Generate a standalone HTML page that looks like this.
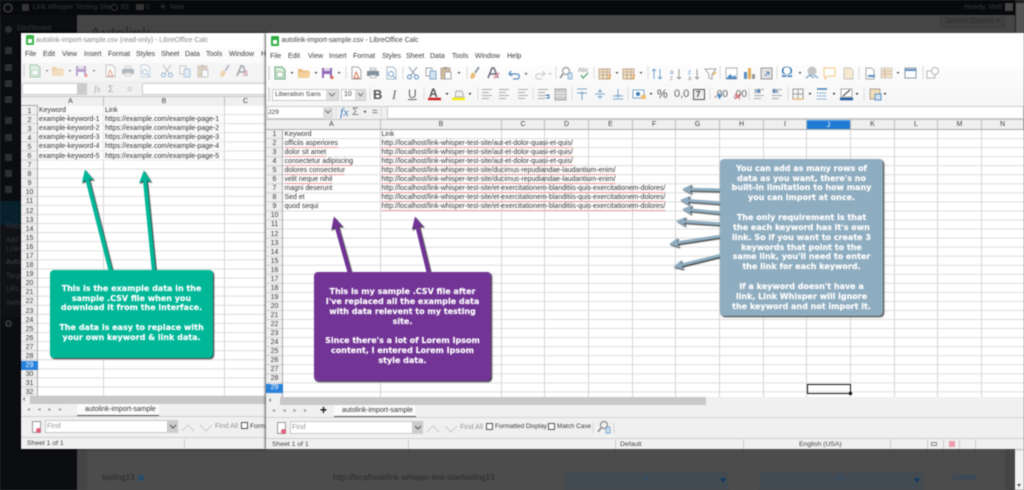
<!DOCTYPE html>
<html><head><meta charset="utf-8"><style>
*{box-sizing:border-box}
html,body{margin:0;padding:0;width:1024px;height:490px;overflow:hidden;background:#4a4a4a}
#w{position:absolute;left:0;top:0;width:1024px;height:490px;overflow:hidden;filter:blur(.55px);font-family:"Liberation Sans",sans-serif}
.a{position:absolute}
.t{position:absolute;white-space:nowrap;line-height:10px}
.m{font-size:7px;color:#3c3c3c}
.d{font-size:6.95px;color:#333}
.dim{color:#35383c;font-size:7px}
.win{position:absolute;background:#f0f0f0;overflow:hidden}
.grid{position:absolute;background-color:#fff}
.rn{position:absolute;text-align:center;font-size:7px;color:#3c3c3c;white-space:pre}
.ch{position:absolute;text-align:center;font-size:7px;color:#444;line-height:9px;border-right:1px solid #bbb;background:#efefef;height:9px}
.sq{display:inline-block;line-height:8.5px;background:repeating-linear-gradient(90deg,#e46a6a 0 1px,#f7d5d5 1px 2px) 0 100%/100% 1px no-repeat}
.card{position:absolute;border-radius:4px;box-shadow:1px 1px 1.5px #222}
.c{position:absolute;text-align:center;white-space:nowrap;font:bold 8px/9.85px "DejaVu Sans",sans-serif;color:#fff;-webkit-text-stroke:.15px #fff;left:0;right:0}
svg{position:absolute;left:0;top:0;overflow:visible}
</style></head><body><div id="w">

<!-- dark page -->
<div class="a" style="left:0;top:0;width:1024px;height:15px;background:#07090c"></div>
<div class="a" style="left:0;top:15px;width:77px;height:475px;background:#0b0d11"></div>
<div class="a" style="left:77px;top:15px;width:938px;height:475px;background:#454545"></div>
<div class="a" style="left:87px;top:449px;width:918px;height:41px;background:#4c4c4c"></div>
<div class="a" style="left:1015px;top:0;width:9px;height:33px;background:#222"></div>
<div class="a" style="left:1016px;top:3px;width:8px;height:30px;background:#555"></div>
<div class="a" style="left:1015px;top:449px;width:9px;height:41px;background:#f1f1f1"></div>
<div class="a" style="left:1017px;top:484px;width:0;height:0;border:2.5px solid transparent;border-top:3px solid #555"></div>

<div class="t dim" style="left:33px;top:3px">Link Whisper Testing Site</div>
<div class="t dim" style="left:121px;top:3px">63</div>
<div class="t dim" style="left:146px;top:3px">0</div>
<div class="t dim" style="left:170px;top:3px">New</div>
<div class="t dim" style="left:964px;top:3px">Howdy, Matt</div>
<div class="a" style="left:1005px;top:3px;width:8px;height:8px;background:#444"></div>
<div class="a" style="left:3px;top:3px;width:10px;height:10px;border-radius:50%;border:2px solid #333"></div>
<div class="a" style="left:22px;top:4px;width:7px;height:7px;background:#333"></div>
<div class="a" style="left:111px;top:4px;width:7px;height:7px;border-radius:50%;border:1.5px solid #333"></div>
<div class="a" style="left:136px;top:4px;width:8px;height:6px;background:#333"></div>
<div class="t" style="left:160px;top:3px;font-size:10px;color:#333;font-weight:bold">+</div>
<div class="a" style="left:940px;top:17px;width:65px;height:11px;background:#404040;border:1px solid #3a3a3a"></div>
<div class="t dim" style="left:946px;top:17px;color:#2c2c2c">Screen Options ▾</div>
<div class="t" style="left:90px;top:29px;font-size:17px;color:#2c2c2c">Autolink</div>

<div class="t dim" style="left:17px;top:24px">Dashboard</div>
<div class="a" style="left:5px;top:26px;width:7px;height:7px;border-radius:50%;background:#2c2e32"></div>
<div class="a" style="left:5px;top:47px;width:7px;height:7px;background:#2c2e32"></div>
<div class="a" style="left:5px;top:64px;width:7px;height:7px;background:#2c2e32"></div>
<div class="a" style="left:5px;top:80px;width:7px;height:7px;background:#2c2e32"></div>
<div class="a" style="left:5px;top:96px;width:7px;height:7px;background:#2c2e32"></div>
<div class="a" style="left:5px;top:117px;width:7px;height:7px;background:#2c2e32"></div>
<div class="a" style="left:5px;top:134px;width:7px;height:7px;background:#2c2e32"></div>
<div class="a" style="left:5px;top:154px;width:7px;height:7px;background:#2c2e32"></div>
<div class="a" style="left:5px;top:170px;width:7px;height:7px;background:#2c2e32"></div>
<div class="a" style="left:5px;top:186px;width:7px;height:7px;background:#2c2e32"></div>
<div class="a" style="left:0;top:201px;width:21px;height:24px;background:#08202c"></div>
<div class="a" style="left:0;top:225px;width:21px;height:92px;background:#101216"></div>
<div class="t dim" style="left:6px;top:222px">Repor</div>
<div class="t dim" style="left:6px;top:236px">Add</div>
<div class="t dim" style="left:6px;top:245px">Links</div>
<div class="t dim" style="left:6px;top:258px;color:#45484c">Autol</div>
<div class="t dim" style="left:6px;top:272px">Targe</div>
<div class="t dim" style="left:6px;top:285px">URL C</div>
<div class="t dim" style="left:6px;top:299px">Settir</div>
<div class="a" style="left:5px;top:320px;width:7px;height:7px;border-radius:50%;border:2px solid #35383c"></div>

<div class="t" style="left:102px;top:473px;font-size:8px;color:#2a2a2a">testing13</div>
<div class="a" style="left:138px;top:475px;width:6px;height:6px;border-radius:50%;border:2px solid #1f4d75"></div>
<div class="t" style="left:333px;top:473px;font-size:8px;color:#2a2a2a">http://localhost/link-whisper-test-site/testing13</div>
<div class="a" style="left:564px;top:472px;width:165px;height:18px;background:#434b52"></div>
<div class="t" style="left:644px;top:474px;font-size:8px;color:#1f4d75">0</div>
<div class="a" style="left:720px;top:478px;border:3.5px solid transparent;border-top:5px solid #123a5e"></div>
<div class="a" style="left:759px;top:472px;width:165px;height:18px;background:#434b52"></div>
<div class="t" style="left:838px;top:474px;font-size:8px;color:#1f4d75">0</div>
<div class="a" style="left:914px;top:478px;border:3.5px solid transparent;border-top:5px solid #123a5e"></div>
<div class="t" style="left:953px;top:473px;font-size:8px;color:#23456a">Delete</div>

<!-- LEFT WINDOW -->
<div class="win" style="left:21px;top:33px;width:246px;height:416px;box-shadow:0 0 2px #000">
 <div class="a" style="left:0;top:0;width:246px;height:15px;background:#fff"></div>
 <div class="a" style="left:0;top:15px;width:246px;height:15px;background:#fbfbfb"></div>
 <div class="a" style="left:0;top:30px;width:246px;height:18px;background:#f5f5f5"></div>
</div>
<div class="a" style="left:26px;top:35px;width:8px;height:10px;background:#3db54a;border-radius:1px"></div>
<div class="a" style="left:28px;top:39px;width:4px;height:4px;background:#fff"></div>
<div class="t" style="left:36px;top:35.5px;font-size:6.9px;color:#8a8a8a">autolink-import-sample.csv (read-only) - LibreOffice Calc</div>
<div class="t m" style="left:25px;top:50px">File</div><div class="t m" style="left:43px;top:50px">Edit</div><div class="t m" style="left:62px;top:50px">View</div><div class="t m" style="left:84px;top:50px">Insert</div><div class="t m" style="left:108px;top:50px">Format</div><div class="t m" style="left:136px;top:50px">Styles</div><div class="t m" style="left:161px;top:50px">Sheet</div><div class="t m" style="left:185px;top:50px">Data</div><div class="t m" style="left:206px;top:50px">Tools</div><div class="t m" style="left:229px;top:50px">Window</div><div class="t m" style="left:261px;top:50px">H</div>

<!-- left name box row -->
<div class="a" style="left:21px;top:81px;width:246px;height:15px;background:#f0f0f0"></div>
<div class="a" style="left:22px;top:83px;width:56px;height:12px;background:#fff;border:1px solid #ccc"></div>
<div class="a" style="left:78px;top:83px;width:9px;height:12px;background:#ccc"></div>
<div class="a" style="left:142px;top:83px;width:125px;height:12px;background:#fff;border:1px solid #ccc"></div>
<div class="t" style="left:94px;top:84px;font:italic 9px/10px 'Liberation Serif',serif;color:#aaa">fx</div>
<div class="t" style="left:108px;top:84px;font-size:9px;color:#aaa">Σ</div>
<div class="t" style="left:127px;top:84px;font-size:9px;color:#aaa">=</div>

<!-- left grid -->
<div class="a" style="left:21px;top:96px;width:246px;height:10px;background:#efefef;border-top:1px solid #c4c4c4;border-bottom:1px solid #aaa"></div>
<div class="ch" style="left:38px;top:97px;width:66px">A</div>
<div class="ch" style="left:104px;top:97px;width:121px">B</div>
<div class="ch" style="left:225px;top:97px;width:42px">C</div>
<div class="grid" style="left:38px;top:106px;width:229px;height:290px;background-image:linear-gradient(to bottom,transparent 8.09px,#dcdcdc 8.09px),linear-gradient(to right,transparent 65px,#d4d4d4 65px,#d4d4d4 66px,transparent 66px,transparent 186px,#d4d4d4 186px,#d4d4d4 187px,transparent 187px);background-size:100% 9.09px,100% 100%"></div>
<div class="a" style="left:38px;top:106px;width:186px;height:54.5px;background:#f7f7f7;opacity:.5"></div>
<div class="a" style="left:21px;top:106px;width:17px;height:290px;background:#efefef;border-right:1px solid #aaa;background-image:linear-gradient(to bottom,transparent 8.09px,#cfcfcf 8.09px);background-size:100% 9.09px"></div>
<div class="a" style="left:21px;top:360.5px;width:17px;height:9px;background:#2a82da"></div>
<div class="rn" style="left:21px;top:106.5px;width:17px;line-height:9.09px">1
2
3
4
5
6
7
8
9
10
11
12
13
14
15
16
17
18
19
20
21
22
23
24
25
26
27
28
<span style="color:#fff">29</span>
30
31
32</div>
<div class="t d" style="left:39px;top:106px">Keyword</div><div class="t d" style="left:105px;top:106px">Link</div>
<div class="t d" style="left:39px;top:115px">example-keyword-1</div><div class="t d" style="left:105px;top:115px">https://example.com/example-page-1</div>
<div class="t d" style="left:39px;top:124px">example-keyword-2</div><div class="t d" style="left:105px;top:124px">https://example.com/example-page-2</div>
<div class="t d" style="left:39px;top:133.3px">example-keyword-3</div><div class="t d" style="left:105px;top:133.3px">https://example.com/example-page-3</div>
<div class="t d" style="left:39px;top:142.4px">example-keyword-4</div><div class="t d" style="left:105px;top:142.4px">https://example.com/example-page-4</div>
<div class="t d" style="left:39px;top:151.5px">example-keyword-5</div><div class="t d" style="left:105px;top:151.5px">https://example.com/example-page-5</div>

<div class="a" style="left:21px;top:396px;width:246px;height:8px;background:#c8c8c8"></div>
<div class="a" style="left:21px;top:396px;width:9px;height:8px;background:#efefef"></div>
<div class="t" style="left:23px;top:395px;font-size:7px;font-weight:bold;color:#444">‹</div>
<div class="a" style="left:21px;top:404px;width:246px;height:34px;background:#f0f0f0"></div>
<div class="a" style="left:21px;top:416px;width:246px;height:1px;background:#d0d0d0"></div>
<div class="t" style="left:27px;top:405px;font-size:6px;color:#999;word-spacing:6px">◂ ◂ ▸ ▸</div>
<div class="a" style="left:77px;top:404px;width:82px;height:12px;background:#fbfbfb;border-bottom:1px solid #555"></div>
<div class="t" style="left:85px;top:405px;font-size:7px;color:#333">autolink-import-sample</div>
<div class="a" style="left:32px;top:421px;width:9px;height:12px;background:#fff;border:1px solid #999"></div>
<div class="a" style="left:36px;top:428px;width:5px;height:5px;border-radius:50%;background:#e0607a"></div>
<div class="a" style="left:45px;top:420px;width:123px;height:13px;background:#fff;border:1px solid #c8c8c8"></div>
<div class="t" style="left:47px;top:422px;font-size:7px;color:#999">Find</div>
<div class="a" style="left:168px;top:420px;width:10px;height:13px;background:#ccc"></div>
<div class="t" style="left:215px;top:422px;font-size:7px;color:#999">Find All</div>
<div class="a" style="left:241px;top:422px;width:7px;height:7px;background:#fff;border:1px solid #555"></div>
<div class="t m" style="left:250px;top:421.5px;font-size:6.5px">Forma</div>
<div class="a" style="left:21px;top:437px;width:246px;height:1px;background:#d0d0d0"></div>
<div class="t" style="left:27px;top:439px;font-size:6.8px;color:#444">Sheet 1 of 1</div>
<div class="a" style="left:184px;top:439px;width:1px;height:9px;background:#ccc"></div>

<!-- RIGHT WINDOW -->
<div class="win" style="left:266px;top:33px;width:758px;height:416px;box-shadow:-1px 0 2px #555">
 <div class="a" style="left:0;top:0;width:758px;height:32px;background:#fff"></div>
 <div class="a" style="left:0;top:32px;width:758px;height:54px;background:linear-gradient(#fdfdfd,#f3f3f3)"></div>
 <div class="a" style="left:0;top:73px;width:758px;height:13px;background:#f0f0f0;border-top:1px solid #ccc"></div>
</div>
<div class="a" style="left:271px;top:36px;width:8px;height:10px;background:#2fae44;border-radius:1px"></div>
<div class="a" style="left:273px;top:40px;width:4px;height:4px;background:#fff"></div>
<div class="t" style="left:281.5px;top:36px;font-size:6.9px;color:#444">autolink-import-sample.csv - LibreOffice Calc</div>
<div class="t m" style="left:270px;top:51.5px">File</div><div class="t m" style="left:288px;top:51.5px">Edit</div><div class="t m" style="left:308px;top:51.5px">View</div><div class="t m" style="left:329px;top:51.5px">Insert</div><div class="t m" style="left:353px;top:51.5px">Format</div><div class="t m" style="left:382px;top:51.5px">Styles</div><div class="t m" style="left:406px;top:51.5px">Sheet</div><div class="t m" style="left:430px;top:51.5px">Data</div><div class="t m" style="left:452px;top:51.5px">Tools</div><div class="t m" style="left:475px;top:51.5px">Window</div><div class="t m" style="left:507px;top:51.5px">Help</div>

<!-- font row boxes -->
<div class="a" style="left:272px;top:89px;width:67px;height:12px;background:#fff;border:1px solid #ccc"></div>
<div class="a" style="left:326px;top:90px;width:12px;height:10px;background:#ddd"></div>
<div class="t" style="left:275px;top:90px;font-size:6.6px;color:#444">Liberation Sans</div>
<div class="a" style="left:341px;top:89px;width:25px;height:12px;background:#fff;border:1px solid #ccc"></div>
<div class="a" style="left:355px;top:90px;width:10px;height:10px;background:#ddd"></div>
<div class="t" style="left:344px;top:90px;font-size:6.9px;color:#444">10</div>
<div class="t" style="left:373px;top:88px;font-size:13px;line-height:13px;font-weight:bold;color:#555">B</div>
<div class="t" style="left:392px;top:88px;font:italic 13px/13px 'Liberation Serif',serif;color:#666">I</div>
<div class="t" style="left:408px;top:88px;font-size:12px;line-height:13px;color:#666;text-decoration:underline">U</div>
<div class="t" style="left:429px;top:87px;font-size:12px;line-height:13px;font-weight:bold;color:#555">A</div>
<div class="t" style="left:657px;top:88px;font-size:12px;line-height:13px;color:#555">%</div>
<div class="t" style="left:674px;top:88px;font-size:11px;line-height:13px;color:#666">0,0</div>
<div class="a" style="left:693px;top:89px;width:12px;height:11px;background:#eee;border:1.5px solid #555"></div>
<div class="t" style="left:696px;top:90px;font-size:8px;line-height:9px;font-weight:bold;color:#444">7</div>
<div class="t" style="left:714px;top:88px;font-size:10px;line-height:13px;color:#666">,00</div>
<div class="t" style="left:733px;top:88px;font-size:10px;line-height:13px;color:#666">,00</div>
<div class="t" style="left:781px;top:65px;font:16px/16px 'Liberation Serif',serif;color:#3d7ab5">Ω</div>

<!-- formula row -->
<div class="a" style="left:267px;top:106px;width:57px;height:13px;background:#fff;border:1px solid #ccc"></div>
<div class="a" style="left:323px;top:106px;width:10px;height:13px;background:#ddd"></div>
<div class="t" style="left:268px;top:107.5px;font-size:6.8px;color:#444">J29</div>
<div class="a" style="left:387px;top:106px;width:637px;height:13px;background:#fff;border:1px solid #ccc"></div>
<div class="t" style="left:340px;top:106px;font:italic 12px/13px 'Liberation Serif',serif;color:#3d7ab5">fx</div>
<div class="t" style="left:352px;top:106px;font-size:11px;line-height:13px;color:#777">Σ</div>
<div class="t" style="left:372px;top:106px;font-size:10px;line-height:13px;color:#666">=</div>

<!-- right grid -->
<div class="a" style="left:266px;top:119px;width:758px;height:11px;background:#efefef;border-top:1px solid #c4c4c4;border-bottom:1px solid #aaa"></div>
<div class="ch" style="left:283px;top:120px;width:98px">A</div>
<div class="ch" style="left:381px;top:120px;width:121px">B</div>
<div class="ch" style="left:502px;top:120px;width:43px">C</div>
<div class="ch" style="left:545px;top:120px;width:44px">D</div>
<div class="ch" style="left:589px;top:120px;width:44px">E</div>
<div class="ch" style="left:633px;top:120px;width:43px">F</div>
<div class="ch" style="left:676px;top:120px;width:44px">G</div>
<div class="ch" style="left:720px;top:120px;width:44px">H</div>
<div class="ch" style="left:764px;top:120px;width:43px">I</div>
<div class="ch" style="left:807px;top:120px;width:44px;background:#1f7ad6;color:#fff;border-top:1px solid #5aa3e8">J</div>
<div class="ch" style="left:851px;top:120px;width:44px">K</div>
<div class="ch" style="left:895px;top:120px;width:43px">L</div>
<div class="ch" style="left:938px;top:120px;width:44px">M</div>
<div class="ch" style="left:982px;top:120px;width:42px">N</div>
<div class="grid" style="left:283px;top:130px;width:741px;height:267px;background-image:linear-gradient(to bottom,transparent 8.05px,#dcdcdc 8.05px)
,linear-gradient(to right,transparent 97px,#d4d4d4 97px,#d4d4d4 98px,transparent 98px,transparent 218px,#d4d4d4 218px,#d4d4d4 219px,transparent 219px,transparent 261px,#d4d4d4 261px,#d4d4d4 262px,transparent 262px,transparent 305px,#d4d4d4 305px,#d4d4d4 306px,transparent 306px,transparent 349px,#d4d4d4 349px,#d4d4d4 350px,transparent 350px,transparent 392px,#d4d4d4 392px,#d4d4d4 393px,transparent 393px,transparent 436px,#d4d4d4 436px,#d4d4d4 437px,transparent 437px,transparent 480px,#d4d4d4 480px,#d4d4d4 481px,transparent 481px,transparent 523px,#d4d4d4 523px,#d4d4d4 524px,transparent 524px,transparent 567px,#d4d4d4 567px,#d4d4d4 568px,transparent 568px,transparent 611px,#d4d4d4 611px,#d4d4d4 612px,transparent 612px,transparent 654px,#d4d4d4 654px,#d4d4d4 655px,transparent 655px,transparent 698px,#d4d4d4 698px,#d4d4d4 699px,transparent 699px);background-size:100% 9.05px,100% 100%"></div>
<div class="a" style="left:266px;top:130px;width:17px;height:267px;background:#efefef;border-right:1px solid #aaa;background-image:linear-gradient(to bottom,transparent 8.05px,#cfcfcf 8.05px);background-size:100% 9.05px"></div>
<div class="a" style="left:266px;top:383.5px;width:17px;height:9px;background:#2a82da"></div>
<div class="rn" style="left:266px;top:130px;width:17px;line-height:9.05px">1
2
3
4
5
6
7
8
9
10
11
12
13
14
15
16
17
18
19
20
21
22
23
24
25
26
27
28
<span style="color:#fff">29</span></div>
<div class="t d" style="left:284.5px;top:129.5px">Keyword</div><div class="t d" style="left:381.5px;top:129.5px">Link</div>
<div class="t d" style="left:284.5px;top:138.6px"><span class="sq">officiis asperiores</span></div><div class="t d" style="left:381.5px;top:138.6px"><span class="sq">http://localhost/link-whisper-test-site/aut-et-dolor-quasi-et-quis/</span></div>
<div class="t d" style="left:284.5px;top:147.6px"><span class="sq">dolor sit amet</span></div><div class="t d" style="left:381.5px;top:147.6px"><span class="sq">http://localhost/link-whisper-test-site/aut-et-dolor-quasi-et-quis/</span></div>
<div class="t d" style="left:284.5px;top:156.7px"><span class="sq">consectetur adipiscing</span></div><div class="t d" style="left:381.5px;top:156.7px"><span class="sq">http://localhost/link-whisper-test-site/aut-et-dolor-quasi-et-quis/</span></div>
<div class="t d" style="left:284.5px;top:165.7px"><span class="sq">dolores consectetur</span></div><div class="t d" style="left:381.5px;top:165.7px"><span class="sq">http://localhost/link-whisper-test-site/ducimus-repudiandae-laudantium-enim/</span></div>
<div class="t d" style="left:284.5px;top:174.8px"><span class="sq">velit neque nihil</span></div><div class="t d" style="left:381.5px;top:174.8px"><span class="sq">http://localhost/link-whisper-test-site/ducimus-repudiandae-laudantium-enim/</span></div>
<div class="t d" style="left:284.5px;top:183.8px">magni deserunt</div><div class="t d" style="left:381.5px;top:183.8px"><span class="sq">http://localhost/link-whisper-test-site/et-exercitationem-blanditiis-quis-exercitationem-dolores/</span></div>
<div class="t d" style="left:284.5px;top:192.9px">Sed et</div><div class="t d" style="left:381.5px;top:192.9px"><span class="sq">http://localhost/link-whisper-test-site/et-exercitationem-blanditiis-quis-exercitationem-dolores/</span></div>
<div class="t d" style="left:284.5px;top:201.9px">quod sequi</div><div class="t d" style="left:381.5px;top:201.9px"><span class="sq">http://localhost/link-whisper-test-site/et-exercitationem-blanditiis-quis-exercitationem-dolores/</span></div>
<div class="a" style="left:807px;top:384px;width:44px;height:10px;border:1px solid #111"></div>
<div class="a" style="left:849px;top:392px;width:3px;height:3px;background:#111"></div>

<div class="a" style="left:266px;top:397px;width:758px;height:8px;background:#f0f0f0"></div>
<div class="a" style="left:280px;top:397px;width:426px;height:8px;background:#c8c8c8"></div>
<div class="t" style="left:269px;top:396px;font-size:7px;font-weight:bold;color:#444">‹</div>
<div class="a" style="left:266px;top:405px;width:758px;height:33px;background:#f0f0f0"></div>
<div class="a" style="left:266px;top:417px;width:758px;height:1px;background:#d4d4d4"></div>
<div class="t" style="left:272px;top:406px;font-size:6px;color:#999;word-spacing:6px">◂ ◂ ▸ ▸</div>
<div class="t" style="left:320px;top:405px;font-size:12px;font-weight:bold;color:#111">+</div>
<div class="a" style="left:334px;top:405px;width:82px;height:12px;background:#fbfbfb;border-bottom:1px solid #555"></div>
<div class="t" style="left:342px;top:406px;font-size:7px;color:#333">autolink-import-sample</div>
<div class="a" style="left:277px;top:422px;width:9px;height:12px;background:#fff;border:1px solid #999"></div>
<div class="a" style="left:281px;top:429px;width:5px;height:5px;border-radius:50%;background:#e0607a"></div>
<div class="a" style="left:290px;top:421px;width:123px;height:13px;background:#fff;border:1px solid #c8c8c8"></div>
<div class="t" style="left:292px;top:422.5px;font-size:7px;color:#999">Find</div>
<div class="a" style="left:413px;top:421px;width:10px;height:13px;background:#ccc"></div>
<div class="t" style="left:460px;top:422.5px;font-size:7px;color:#999">Find All</div>
<div class="a" style="left:486px;top:423px;width:7px;height:7px;background:#fff;border:1px solid #555"></div>
<div class="t m" style="left:495px;top:422px;font-size:6.4px">Formatted Display</div>
<div class="a" style="left:548px;top:423px;width:7px;height:7px;background:#fff;border:1px solid #555"></div>
<div class="t m" style="left:557px;top:422px;font-size:6.4px">Match Case</div>
<div class="a" style="left:266px;top:438px;width:758px;height:1px;background:#d0d0d0"></div>
<div class="t" style="left:272px;top:439.5px;font-size:6.8px;color:#444">Sheet 1 of 1</div>
<div class="a" style="left:408px;top:440px;width:1px;height:9px;background:#ccc"></div>
<div class="a" style="left:615px;top:440px;width:1px;height:9px;background:#ccc"></div>
<div class="t" style="left:620px;top:439.5px;font-size:6.8px;color:#444">Default</div>
<div class="a" style="left:743px;top:440px;width:1px;height:9px;background:#ccc"></div>
<div class="t" style="left:799px;top:439.5px;font-size:6.8px;color:#444">English (USA)</div>
<div class="a" style="left:890px;top:440px;width:1px;height:9px;background:#ccc"></div>
<div class="a" style="left:927px;top:440px;width:1px;height:9px;background:#ccc"></div>
<div class="a" style="left:943px;top:440px;width:1px;height:9px;background:#ccc"></div>
<div class="a" style="left:959px;top:440px;width:1px;height:9px;background:#ccc"></div>
<div class="a" style="left:975px;top:440px;width:1px;height:9px;background:#ccc"></div>
<div class="a" style="left:931px;top:442px;width:6px;height:4px;border:1px solid #888"></div>
<div class="a" style="left:949px;top:441px;width:6px;height:6px;background:#eba0a8"></div>

<!-- toolbars -->
<svg width="1024" height="490" viewBox="0 0 1024 490">
<defs>
<g id="new"><path d="M-5-6h7l3 3v9h-10z" fill="#d6ecd9" stroke="#4f9a63"/><path d="M-3-1h6v5h-6z" fill="#fff" stroke="#6aa67c" stroke-width=".7"/></g>
<g id="open"><path d="M-6 5v-9h4l1 1.5h6v7.5z" fill="#e9b36c"/><path d="M-6 5l1.5-6h11l-1.5 6z" fill="#f3c98a"/></g>
<g id="save"><path d="M-5-5h10v10h-10z" fill="#7e4fa8"/><path d="M-3-5h6v3h-6z" fill="#d9cbe6"/><path d="M-3 1h6v4h-6z" fill="#fff"/><circle cx="5" cy="4.5" r="1.6" fill="#e0503a"/></g>
<g id="pdf"><path d="M-4-6h6l3 3v9h-9z" fill="#fff" stroke="#999"/><path d="M0-1l3 6h-5z" fill="none" stroke="#d9603e"/></g>
<g id="print"><path d="M-3-5h6v3h-6z" fill="#ddd" stroke="#999" stroke-width=".6"/><path d="M-6-2h12v5h-12z" fill="#6f7f8a"/><path d="M-3 2h6v3h-6z" fill="#eee" stroke="#888" stroke-width=".6"/></g>
<g id="prev"><path d="M-4-6h6l3 3v9h-9z" fill="#fff" stroke="#9db0c0"/><circle cx="0" cy="1" r="2.5" fill="none" stroke="#5c93c4"/><path d="M2 3l2.5 2.5" stroke="#5c93c4"/></g>
<g id="cut"><path d="M-4-6l6 8M4-6l-6 8" stroke="#7a8a98" fill="none"/><circle cx="-3.5" cy="4" r="2" fill="none" stroke="#3d7ab5"/><circle cx="3.5" cy="4" r="2" fill="none" stroke="#3d7ab5"/></g>
<g id="copy"><path d="M-5-5h6v8h-6z" fill="#fff" stroke="#999"/><path d="M-1-2h6v8h-6z" fill="#cfe0f0" stroke="#6f9cc4"/></g>
<g id="paste"><path d="M-5-5h9v11h-9z" fill="#c8b08a" stroke="#a99"/><path d="M-2-6h3v2h-3z" fill="#888"/><path d="M-1-1h6v7h-6z" fill="#fff" stroke="#999"/></g>
<g id="brush"><path d="M4-6l-4 6" stroke="#7a8a98" stroke-width="2"/><path d="M-5 5l2-6 4 3-3 4z" fill="#e8b060"/></g>
<g id="clr"><path d="M-5 5l4-10h2l4 10M-3 1h6" fill="none" stroke="#556" stroke-width="1.6"/><path d="M1 5l5-5" stroke="#e08a90" stroke-width="2"/></g>
<path id="ar" d="M-1.5-1h3l-1.500 2z" fill="#333"/>
<g id="lines"><path d="M-5-4.500h10M-5-1.500h7M-5 1.500h10M-5 4.500h7" stroke="#aaa" fill="none"/></g>
<g id="tbl"><path d="M-6-5h11v10h-11z" fill="#f3dcb8" stroke="#a08060" stroke-width=".7"/><path d="M-6-2h11M-6 1h11M-2-5v10M2-5v10" stroke="#908070" stroke-width=".6"/><path d="M3 5l3-4" stroke="#e0a040" stroke-width="1.500"/></g>
</defs>
<g opacity=".5">
<use href="#new" x="35" y="71"/><use href="#ar" x="47" y="71"/><use href="#open" x="58" y="71"/><use href="#ar" x="70" y="71"/><use href="#save" x="81" y="71"/><use href="#ar" x="94" y="71"/>
<use href="#pdf" x="110" y="71"/><use href="#print" x="128" y="71"/><use href="#prev" x="145" y="71"/><use href="#cut" x="167" y="71"/><use href="#copy" x="185" y="71"/><use href="#paste" x="203" y="71"/><use href="#brush" x="225" y="71"/><use href="#clr" x="242" y="71"/>
</g>
<path d="M24 64v13" stroke="#aaa" stroke-dasharray="1 1"/>
<path d="M269 66v13M269 88v13" stroke="#999" stroke-dasharray="1 1"/>
<g opacity=".85">
<use href="#new" x="280" y="73"/><use href="#ar" x="292" y="73"/><use href="#open" x="304" y="73"/><use href="#ar" x="316" y="73"/><use href="#save" x="327" y="73"/><use href="#ar" x="339" y="73"/>
<use href="#pdf" x="356" y="73"/><use href="#print" x="373" y="73"/><use href="#prev" x="391" y="73"/><use href="#cut" x="413" y="73"/><use href="#copy" x="431" y="73"/><use href="#paste" x="446" y="73"/><use href="#ar" x="459" y="73"/><use href="#brush" x="475" y="73"/><use href="#clr" x="493" y="73"/>
<path d="M511 71l-2 3 3 2M510 74h7c3 0 3 5 0 5h-4" fill="none" stroke="#3d7ab5" stroke-width="1.300"/><use href="#ar" x="526" y="74"/>
<path d="M543 71l2 3-3 2M544 74h-6c-3 0-3 5 0 5h4" fill="none" stroke="#c8c8c8" stroke-width="1.300"/><use href="#ar" x="550" y="74" opacity=".4"/>
<circle cx="566" cy="71" r="3.500" fill="none" stroke="#888" stroke-width="1.200"/><path d="M563 74l-3 4" stroke="#777" stroke-width="1.500"/><path d="M568 73h4v6h-4z" fill="#cfe0f0" stroke="#5c93c4" stroke-width=".7"/>
<text x="578" y="72" font-size="6" font-family="Liberation Sans" fill="#777">Abc</text><path d="M581 75l2 3 5-5" fill="none" stroke="#5aa36e" stroke-width="1.500"/>
<use href="#tbl" x="605" y="74"/><use href="#ar" x="617" y="73"/><use href="#tbl" x="629" y="74"/><use href="#ar" x="641" y="73"/>
<path d="M654 69v10M654 69l-2 2M654 69l2 2M660 69v10M660 79l-2-2M660 79l2-2" stroke="#5c93c4" fill="none"/>
<text x="670" y="74" font-size="6" font-family="Liberation Sans" fill="#3d7ab5">a</text><text x="670" y="80" font-size="6" font-family="Liberation Sans" fill="#777">z</text><path d="M679 69v10M679 79l-2-2M679 79l2-2" stroke="#888" fill="none"/>
<text x="688" y="74" font-size="6" font-family="Liberation Sans" fill="#3d7ab5">z</text><text x="688" y="80" font-size="6" font-family="Liberation Sans" fill="#777">a</text><path d="M697 69v10M697 79l-2-2M697 79l2-2" stroke="#888" fill="none"/>
<path d="M705 69h11l-4 5v5l-3-1v-4z" fill="#fff" stroke="#999"/><path d="M713 75l3-3" stroke="#e8a850" stroke-width="1.800"/>
<path d="M726 68h11v11h-11z" fill="#fff" stroke="#888" stroke-width=".7"/><path d="M726 79l4-5 3 3 2-2 2 4z" fill="#2f78b8"/>
<path d="M744 72h3v7h-3z" fill="#3d7ab5"/><path d="M748 68h3v11h-3z" fill="#e0a040"/><path d="M752 74h3v5h-3z" fill="#888"/>
<path d="M761 68h11v11h-11z" fill="#ddd" stroke="#888"/><path d="M765 76l4-4M769 72v3M769 72h-3" stroke="#3d7ab5" fill="none"/>
<use href="#ar" x="800" y="73"/>
<circle cx="812" cy="71" r="4.500" fill="#bbb"/><path d="M806 78l4-3 4 3M818 78l-4-3" stroke="#5c93c4" fill="none" stroke-width="1.300"/>
<path d="M824 68h11v8h-7l-3 3v-3h-1z" fill="#fff" stroke="#f0c070"/>
<path d="M844 68h6l3 2v9h-9z" fill="#f6e6c8" stroke="#aaa" stroke-width=".7"/>
<path d="M866 68h5l3 2v9h-8z" fill="#fff" stroke="#999"/><path d="M868 76h7" stroke="#3d7ab5" stroke-width="2"/>
<path d="M881 68h11v10h-11z" fill="#f3dcb8" stroke="#ccc"/><path d="M881 71h11M881 74h11M885 68v10" stroke="#a99" stroke-width=".6"/>
<use href="#ar" x="898" y="73"/>
<path d="M905 68h11v10h-11z" fill="#fff" stroke="#7a8a98"/><path d="M905 70h11" stroke="#3d7ab5" stroke-width="2"/>
<path d="M927 71h8v7h-8z" fill="#fff" stroke="#aaa"/><circle cx="935" cy="71" r="3.500" fill="#fff" stroke="#aaa"/>
</g>
<path d="M346 66v13M403 66v13M467 66v13M556 66v13M594 66v13M648 66v13M720 66v13M777 66v13M859 66v13M923 66v13" stroke="#dcdcdc"/>
<!-- row 2 -->
<path d="M428 99h13" stroke="#cc2020" stroke-width="2.500"/><use href="#ar" x="447" y="94"/>
<path d="M452 99h13" stroke="#f2ee10" stroke-width="2.500"/><path d="M456 91h6l2 6h-9z" fill="#eee" stroke="#999" stroke-width=".7"/><use href="#ar" x="470" y="94"/>
<use href="#lines" x="487" y="94"/><use href="#lines" x="504" y="94"/><use href="#lines" x="523" y="94"/>
<use href="#lines" x="543" y="94"/><path d="M546 95h3v3h-3" stroke="#3d7ab5" fill="none"/>
<path d="M555 89h11v11h-11z" fill="#ccc" stroke="#aaa"/><path d="M555 93h11M555 96h11" stroke="#eee" stroke-width=".7"/>
<path d="M577 89h10M577 93h3M584 93h3M582 92v8M580 94l2-2 2 2" stroke="#7ba7cc" fill="none"/>
<path d="M595 94h10M600 89v3l-2-1M600 89v3l2-1M600 99v-3l-2 1M600 99v-3l2 1" stroke="#7ba7cc" fill="none"/>
<path d="M613 99h10M613 96h3M620 96h3M618 89v8M616 95l2 2 2-2" stroke="#7ba7cc" fill="none"/>
<path d="M633 90h11v8h-11z" fill="#fff" stroke="#7ba7cc"/><circle cx="638" cy="94" r="2" fill="#3d7ab5"/><path d="M641 95h5v4h-5z" fill="#f0c070"/><use href="#ar" x="651" y="94"/>
<path d="M717 96h5M719.500 93v6" stroke="#3d7ab5" stroke-width="1.300"/><path d="M735 94l5 5M740 94l-5 5" stroke="#e06a70" stroke-width="1.300"/>
<use href="#lines" x="759" y="94"/><path d="M755 91h5M758 89l2 2-2 2" stroke="#3d7ab5" fill="none"/>
<use href="#lines" x="777" y="94"/><path d="M773 91h5M775 89l-2 2 2 2" stroke="#3d7ab5" fill="none"/>
<path d="M793 89h10v10h-10zM793 94h10M798 89v10" fill="none" stroke="#999"/><path d="M793 99h10" stroke="#e8b060" stroke-width="1.200"/><use href="#ar" x="810" y="94"/>
<path d="M817 89h10" stroke="#3d7ab5" stroke-width="1.500"/><path d="M817 93h10M817 96h10M817 99h10" stroke="#5c93c4" stroke-dasharray="1.500 1"/><use href="#ar" x="834" y="94"/>
<path d="M840 99h13" stroke="#1a5a9a" stroke-width="2.500"/><path d="M841 89h11v8h-11z" fill="#fff" stroke="#888" stroke-width=".7"/><path d="M843 96l7-6" stroke="#333"/><use href="#ar" x="857" y="94"/>
<path d="M870 89h10v10h-10z" fill="#f3dcb8" stroke="#888" stroke-width=".7"/><path d="M875 94h6v6h-6z" fill="#cfe0f0" stroke="#5c93c4"/><use href="#ar" x="885" y="94"/>
<path d="M370 87v13M424 87v13M478 87v13M533 87v13M572 87v13M628 87v13M710 87v13M749 87v13M788 87v13M864 87v13" stroke="#dcdcdc"/>
<path d="M329 93l3 3 3-3M358 93l2.500 3 2.500-3M325 110l3 3 3-3" fill="none" stroke="#777"/>
<use href="#ar" x="365" y="112"/>
<path d="M336 106v13M381 106v13" stroke="#dcdcdc"/>
<path d="M415 426l3 3 3-3M170 425l3 3 3-3" fill="none" stroke="#555"/>
<path d="M427 432l6-6 6 6M445 426l6 6 6-6" fill="none" stroke="#ccc" stroke-width="1"/>
<path d="M182 431l6-6 6 6M200 425l6 6 6-6" fill="none" stroke="#ccc" stroke-width="1"/>
<circle cx="604" cy="425" r="3.500" fill="none" stroke="#777"/><path d="M601 428l-3 4" stroke="#777" stroke-width="1.300"/><path d="M606 427h4v6h-4z" fill="#cfe0f0" stroke="#5c93c4" stroke-width=".7"/>
<path d="M593 423v10M614 423v10" stroke="#d4d4d4"/>
</svg>

<!-- arrows -->
<svg width="1024" height="490" viewBox="0 0 1024 490">
<defs>
<marker id="mt" viewBox="0 0 10 10" refX="3" refY="5" markerWidth="3.100" markerHeight="3.100" orient="auto"><path d="M0 0L10 5L0 10L2.500 5z" fill="#00b798"/></marker>
<marker id="mp" viewBox="0 0 10 10" refX="3" refY="5" markerWidth="3.100" markerHeight="3.100" orient="auto"><path d="M0 0L10 5L0 10L2.500 5z" fill="#713396"/></marker>
<marker id="mb" viewBox="0 0 10 10" refX="3" refY="5" markerWidth="3.300" markerHeight="3.300" orient="auto"><path d="M0 0L10 5L0 10L2.500 5z" fill="#8fadc0"/></marker>
</defs>
<g style="filter:drop-shadow(1px 1px .6px #222)">
<g stroke="#00b798" stroke-width="4" fill="none">
<line x1="111" y1="272" x2="87" y2="178" marker-end="url(#mt)"/>
<line x1="154" y1="272" x2="144.800" y2="179" marker-end="url(#mt)"/>
</g>
<g stroke="#713396" stroke-width="4" fill="none">
<line x1="350" y1="274" x2="336.200" y2="225" marker-end="url(#mp)"/>
<line x1="429" y1="274" x2="417" y2="225" marker-end="url(#mp)"/>
</g>
<g stroke="#8fadc0" stroke-width="3" fill="none">
<line x1="722" y1="190" x2="689" y2="189.200" marker-end="url(#mb)"/>
<line x1="722" y1="203" x2="687" y2="200.500" marker-end="url(#mb)"/>
<line x1="722" y1="213" x2="689" y2="209.700" marker-end="url(#mb)"/>
<line x1="722" y1="224" x2="683" y2="221.500" marker-end="url(#mb)"/>
<line x1="722" y1="236" x2="676" y2="243" marker-end="url(#mb)"/>
<line x1="722" y1="255" x2="680" y2="265.300" marker-end="url(#mb)"/>
</g>
</g>
</svg>

<!-- cards -->
<div class="card" style="left:50px;top:270px;width:163px;height:88px;background:#00b798">
<div class="c" style="top:13.800px">This is the example data in the<br>sample .CSV file when you<br>download it from the interface.<br><br>The data is easy to replace with<br>your own keyword &amp; link data.</div></div>
<div class="card" style="left:314px;top:272px;width:177px;height:109px;background:#723596">
<div class="c" style="top:15px">This is my sample .CSV file after<br>I've replaced all the example data<br>with data relevent to my testing<br>site.<br><br>Since there's a lot of Lorem Ipsom<br>content, I entered Lorem Ipsom<br>style data.</div></div>
<div class="card" style="left:720px;top:159px;width:163px;height:157px;background:#8fadc0">
<div class="c" style="top:4.800px">You can add as many rows of<br>data as you want, there's no<br>built-in limitation to how many<br>you can import at once.<br><br>The only requirement is that<br>the each keyword has it's own<br>link. So if you want to create 3<br>keywords that point to the<br>same link, you'll need to enter<br>the link for each keyword.<br><br>If a keyword doesn't have a<br>link, Link Whisper will ignore<br>the keyword and not import it.</div></div>

</div></body></html>
